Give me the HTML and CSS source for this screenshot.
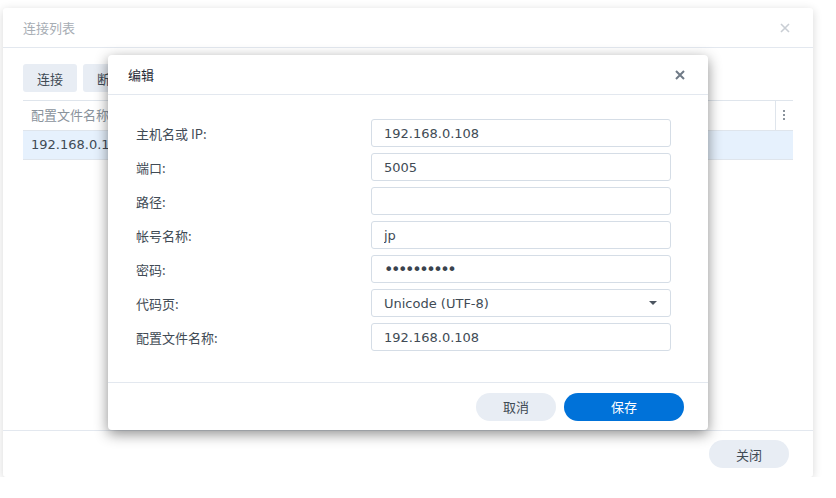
FILE: index.html
```html
<!DOCTYPE html>
<html lang="zh-CN">
<head>
    <meta charset="UTF-8">
    <title>连接列表</title>
    <link rel="stylesheet" href="styles.css">
</head>
<body>
    <div class="window">
        <div class="win-header">
            <span class="win-title">连接列表</span>
            <span class="win-close">
                <svg width="10" height="10" viewBox="0 0 10 10"><path d="M1 1L9 9M9 1L1 9" stroke="currentColor" stroke-width="1.6"/></svg>
            </span>
        </div>
        <div class="win-body">
            <div class="toolbar">
                <button class="btn-grey">连接</button>
                <button class="btn-grey">断开</button>
            </div>
            <div class="grid">
                <div class="grid-head">
                    <div class="grid-col">配置文件名称</div>
                    <div class="grid-menu">
                        <svg width="3" height="11" viewBox="0 0 3 11"><rect x="0" y="0" width="2" height="2" fill="#8a939c"/><rect x="0" y="4" width="2" height="2" fill="#8a939c"/><rect x="0" y="8" width="2" height="2" fill="#8a939c"/></svg>
                    </div>
                </div>
                <div class="grid-row selected">192.168.0.108</div>
            </div>
        </div>
        <div class="win-footer">
            <button class="btn-grey btn-pill">关闭</button>
        </div>

        <div class="modal">
            <div class="modal-header">
                <span class="modal-title">编辑</span>
                <span class="modal-close">
                    <svg width="10" height="10" viewBox="0 0 10 10"><path d="M1 1L9 9M9 1L1 9" stroke="currentColor" stroke-width="2"/></svg>
                </span>
            </div>
            <div class="modal-body">
                <div class="form-row">
                    <label>主机名或 IP:</label>
                    <input type="text" value="192.168.0.108">
                </div>
                <div class="form-row">
                    <label>端口:</label>
                    <input type="text" value="5005">
                </div>
                <div class="form-row">
                    <label>路径:</label>
                    <input type="text" value="">
                </div>
                <div class="form-row">
                    <label>帐号名称:</label>
                    <input type="text" value="jp">
                </div>
                <div class="form-row">
                    <label>密码:</label>
                    <input type="password" class="pwd" value="1234567890">
                </div>
                <div class="form-row">
                    <label>代码页:</label>
                    <div class="select">
                        <span>Unicode (UTF-8)</span>
                        <svg width="8" height="4" viewBox="0 0 8 4"><path d="M0 0H8L4 4Z" fill="#4c5560"/></svg>
                    </div>
                </div>
                <div class="form-row">
                    <label>配置文件名称:</label>
                    <input type="text" value="192.168.0.108">
                </div>
            </div>
            <div class="modal-footer">
                <button class="btn-grey btn-pill">取消</button>
                <button class="btn-blue btn-pill">保存</button>
            </div>
        </div>
    </div>
</body>
</html>
```

FILE: styles.css
```css
body {
    margin: 0;
    padding: 8px 0 0 3px;
    background: #fff;
    font-family: "DejaVu Sans", "Noto Sans CJK SC", sans-serif;
    font-size: 13px;
    color: #414b55;
}
button {
    font-family: "Noto Sans CJK SC", sans-serif;
    font-size: 13px;
    border: none;
    cursor: pointer;
}
.window {
    position: relative;
    width: 810px;
    height: 469px;
    background: #fff;
    border-radius: 3px;
    box-shadow: 0 2px 10px rgba(0, 0, 0, 0.16);
    display: flex;
    flex-direction: column;
}
.win-header {
    height: 39px;
    border-bottom: 1px solid #e3e8ef;
    display: flex;
    align-items: center;
    justify-content: space-between;
    padding: 0 23px 0 20px;
}
.win-title {
    font-family: "Noto Sans CJK SC", sans-serif;
    color: #a7adb4;
}
.win-close {
    color: #c9ced4;
    display: flex;
}
.win-body {
    flex: 1;
    padding: 16px 20px 0 20px;
}
.toolbar {
    display: flex;
    gap: 6px;
    margin-bottom: 8px;
}
.btn-grey {
    background: #e8edf4;
    color: #414b55;
    height: 28px;
    width: 54px;
    border-radius: 3px;
}
.btn-pill {
    width: 80px;
    border-radius: 14px;
}
.btn-blue {
    background: #0072d9;
    color: #fff;
    height: 28px;
    width: 120px;
}
.grid {
    border-top: 1px solid #dfe5ec;
}
.grid-head {
    height: 29px;
    display: flex;
    border-bottom: 1px solid #dfe5ec;
}
.grid-col {
    flex: 1;
    font-family: "Noto Sans CJK SC", sans-serif;
    color: #8a939c;
    line-height: 28px;
    padding-left: 8px;
}
.grid-menu {
    width: 17px;
    border-left: 1px solid #dfe5ec;
    display: flex;
    align-items: center;
    justify-content: center;
}
.grid-row {
    height: 28px;
    line-height: 28px;
    padding-left: 8px;
    border-bottom: 1px solid #dfe5ec;
}
.selected {
    background: #e6f1fd;
}
.win-footer {
    height: 46px;
    border-top: 1px solid #e3e8ef;
    display: flex;
    align-items: center;
    justify-content: flex-end;
    padding-right: 24px;
}
.modal {
    position: absolute;
    left: 105px;
    top: 47px;
    width: 600px;
    height: 375px;
    background: #fff;
    border-radius: 4px;
    box-shadow: 0 4px 14px rgba(0, 0, 0, 0.45);
    display: flex;
    flex-direction: column;
}
.modal-header {
    height: 39px;
    border-bottom: 1px solid #e3e8ef;
    display: flex;
    align-items: center;
    justify-content: space-between;
    padding: 0 23px 0 20px;
}
.modal-title {
    font-family: "Noto Sans CJK SC", sans-serif;
    color: #1f2a36;
}
.modal-close {
    color: #6f7a86;
    display: flex;
}
.modal-body {
    flex: 1;
    padding: 24px 37px 0 28px;
    display: flex;
    flex-direction: column;
    gap: 6px;
    border-bottom: 1px solid #e3e8ef;
}
.form-row {
    display: flex;
    align-items: center;
    justify-content: space-between;
    height: 28px;
}
.form-row label {
    font-family: "Noto Sans CJK SC", sans-serif;
}
.form-row input,
.select {
    box-sizing: border-box;
    width: 300px;
    height: 28px;
    border: 1px solid #d5dde6;
    border-radius: 3px;
    padding: 0 12px;
    font-family: "DejaVu Sans", sans-serif;
    font-size: 13px;
    color: #414b55;
    outline: none;
}
.form-row .pwd {
    font-size: 16px;
    letter-spacing: -2.4px;
    color: #3a434d;
}
.select {
    display: flex;
    align-items: center;
    justify-content: space-between;
    padding-right: 13px;
}
.modal-footer {
    height: 47px;
    display: flex;
    align-items: center;
    justify-content: flex-end;
    gap: 8px;
    padding-right: 24px;
}
```
